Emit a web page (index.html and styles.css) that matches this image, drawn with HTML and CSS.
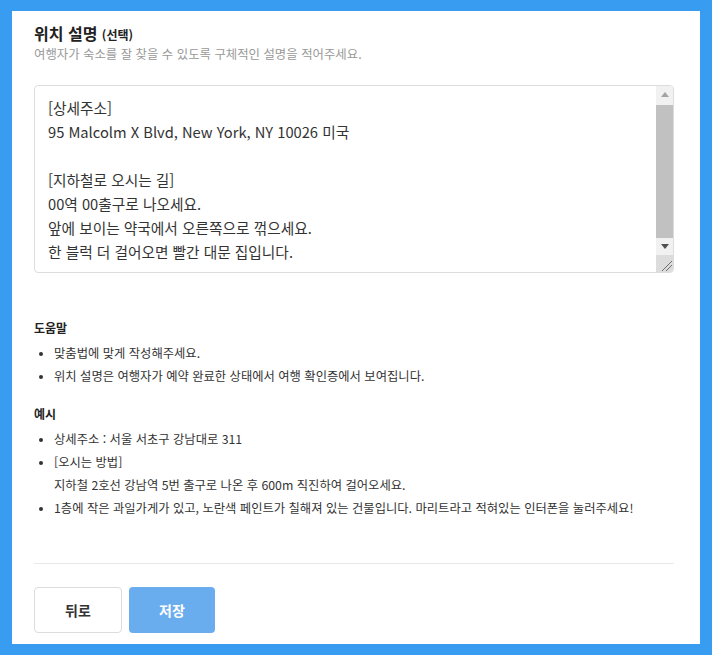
FILE: index.html
```html
<!DOCTYPE html>
<html lang="ko">
<head>
    <meta charset="UTF-8">
    <meta name="viewport" content="width=device-width, initial-scale=1.0">
    <title>위치 설명</title>
    <link rel="stylesheet" href="styles.css">
</head>
<body>

    <div class="panel">
        <div class="field-head">
            <h2 class="field-title">위치 설명 <span class="optional">(선택)</span></h2>
            <p class="field-desc">여행자가 숙소를 잘 찾을 수 있도록 구체적인 설명을 적어주세요.</p>
        </div>

        <div class="text-wrap">
            <textarea class="location-text">[상세주소]
95 Malcolm X Blvd, New York, NY 10026 미국

[지하철로 오시는 길]
00역 00출구로 나오세요.
앞에 보이는 약국에서 오른쪽으로 꺾으세요.
한 블럭 더 걸어오면 빨간 대문 집입니다.</textarea>

            <!-- drawn scrollbar (headless hides the native one) -->
            <div class="fake-scroll">
                <div class="sb-btn">
                    <svg width="8" height="5" viewBox="0 0 8 5"><path d="M0 5 L4 0 L8 5 Z" fill="#a3a3a3"/></svg>
                </div>
                <div class="sb-track">
                    <div class="sb-thumb"></div>
                </div>
                <div class="sb-btn">
                    <svg width="8" height="5" viewBox="0 0 8 5"><path d="M0 0 L8 0 L4 5 Z" fill="#505050"/></svg>
                </div>
                <div class="sb-corner">
                    <svg width="17" height="17" viewBox="0 0 17 17"><path d="M6 16 L16 6 M10 16 L16 10" stroke="#6f6f6f" stroke-width="1"/></svg>
                </div>
            </div>
        </div>

        <div class="help">
            <h3 class="help-title">도움말</h3>
            <ul class="help-list">
                <li>맞춤법에 맞게 작성해주세요.</li>
                <li>위치 설명은 여행자가 예약 완료한 상태에서 여행 확인증에서 보여집니다.</li>
            </ul>

            <h3 class="help-title">예시</h3>
            <ul class="help-list">
                <li>상세주소 : 서울 서초구 강남대로 311</li>
                <li>[오시는 방법]<br>지하철 2호선 강남역 5번 출구로 나온 후 600m 직진하여 걸어오세요.</li>
                <li>1층에 작은 과일가게가 있고, 노란색 페인트가 칠해져 있는 건물입니다. 마리트라고 적혀있는 인터폰을 눌러주세요!</li>
            </ul>
        </div>

        <div class="actions">
            <button class="btn btn-back">뒤로</button>
            <button class="btn btn-save">저장</button>
        </div>
    </div>

</body>
</html>
```

FILE: styles.css
```css
/* Basic styling */
body {
    margin: 0;
    background-color: #389df0;
    font-family: "Noto Sans CJK KR", "Noto Sans", sans-serif;
    color: #333;
    padding: 11px 12px;
    height: 655px;
    box-sizing: border-box;
}

.panel {
    background-color: #fff;
    height: 633px;
    box-sizing: border-box;
    padding: 11px 26px 0 22px;
}

.field-title {
    margin: 0;
    font-size: 16px;
    line-height: 22px;
    font-weight: 700;
    color: #222;
}

.optional {
    font-size: 12px;
    line-height: 1;
}

.field-desc {
    margin: 1px 0 0 0;
    font-size: 12.4px;
    line-height: 18px;
    color: #999;
}

.text-wrap {
    position: relative;
    margin-top: 22px;
}

.location-text {
    display: block;
    width: 100%;
    height: 188px;
    box-sizing: border-box;
    padding: 10px 30px 10px 13px;
    border: 1px solid #ddd;
    border-radius: 4px;
    font-family: "Noto Sans CJK KR", "Noto Sans", sans-serif;
    font-size: 14.7px;
    line-height: 24px;
    color: #333;
    resize: none;
    overflow: hidden;
}

/* scrollbar */
.fake-scroll {
    position: absolute;
    top: 1px;
    right: 1px;
    bottom: 1px;
    width: 17px;
    display: flex;
    flex-direction: column;
    background-color: #f1f1f1;
    border-radius: 0 3px 3px 0;
    overflow: hidden;
}

.sb-btn {
    height: 17px;
    display: flex;
    align-items: center;
    justify-content: center;
}

.sb-track {
    flex: 1;
    padding-top: 2px;
    display: flex;
}

.sb-thumb {
    flex: 1;
    background-color: #c1c1c1;
}

.sb-corner {
    height: 17px;
    background-color: #dcdcdc;
}

.sb-corner svg {
    display: block;
}

.help {
    margin-top: 45px;
    padding-bottom: 43px;
    border-bottom: 1px solid #e8e8e8;
}

.help-title {
    margin: 0 0 4px 0;
    font-size: 12px;
    line-height: 20px;
    font-weight: 700;
    color: #222;
}

.help-list {
    margin: 0 0 16px 0;
    padding-left: 20px;
    font-size: 12.3px;
    line-height: 23px;
    color: #333;
}

.help-list:last-child {
    margin-bottom: 0;
}

.help-list li::marker {
    font-size: 10px;
}

.actions {
    display: flex;
    gap: 7px;
    margin-top: 23px;
}

.btn {
    height: 46px;
    border-radius: 4px;
    font-family: "Noto Sans CJK KR", "Noto Sans", sans-serif;
    font-size: 14px;
    font-weight: 700;
    cursor: pointer;
}

.btn-back {
    width: 88px;
    background-color: #fff;
    border: 1px solid #dcdcdc;
    color: #333;
}

.btn-save {
    width: 86px;
    background-color: #69adef;
    border: none;
    color: #fff;
}
```
